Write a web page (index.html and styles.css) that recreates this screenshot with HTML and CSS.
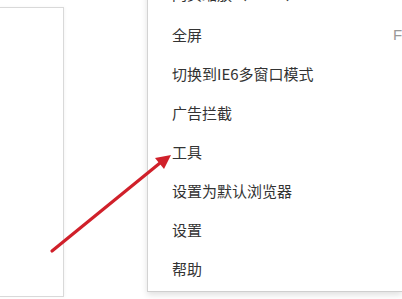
FILE: index.html
```html
<!DOCTYPE html>
<html>
<head>
    <title>菜单</title>
    <link rel="stylesheet" href="styles.css">
</head>
<body>
    <div class="page">
        <div class="side-panel"></div>

        <ul class="menu">
            <li class="menu-item menu-item-first">网页缩放（100%）</li>
            <li class="menu-item">全屏 <span class="shortcut">F11</span></li>
            <li class="menu-item">切换到IE6多窗口模式</li>
            <li class="menu-item">广告拦截</li>
            <li class="menu-item">工具</li>
            <li class="menu-item">设置为默认浏览器</li>
            <li class="menu-item">设置</li>
            <li class="menu-item">帮助</li>
        </ul>
    </div>

    <!-- annotation arrow pointing at 工具 -->
    <svg class="arrow" width="402" height="299" viewBox="0 0 402 299">
        <line x1="52" y1="251" x2="160" y2="163" stroke="#d0202a" stroke-width="3.2" stroke-linecap="round"/>
        <polygon points="171,155 155,158 164,169" fill="#d0202a"/>
    </svg>
</body>
</html>
```

FILE: styles.css
```css
body { margin: 0; background: #fff; font-family: "Noto Sans CJK SC", "Microsoft YaHei", sans-serif; overflow: hidden; }
.page { display: flex; height: 299px; }
.side-panel { width: 63px; height: 288px; margin-top: 7px; margin-left: -1px; border: 1px solid #d9d9d9; background: #fff; box-shadow: 1px 0 3px rgba(0,0,0,0.04); }
.menu { list-style: none; margin: -24px 0 0 83px; padding: 0 0 1px; flex: 1; height: 314px; background: #fff; border-left: 1px solid #d3d3d3; border-bottom: 1px solid #cfcfcf; box-shadow: 0 3px 6px rgba(0,0,0,0.12); }
.menu-item { position: relative; height: 39px; line-height: 39px; padding-left: 24px; font-size: 15px; color: #333; white-space: nowrap; }
.menu-item-first { line-height: 35px; }
.shortcut { position: absolute; left: 245px; color: #999; font-family: "Liberation Sans", sans-serif; }
.arrow { position: absolute; top: 0; left: 0; pointer-events: none; }
```
